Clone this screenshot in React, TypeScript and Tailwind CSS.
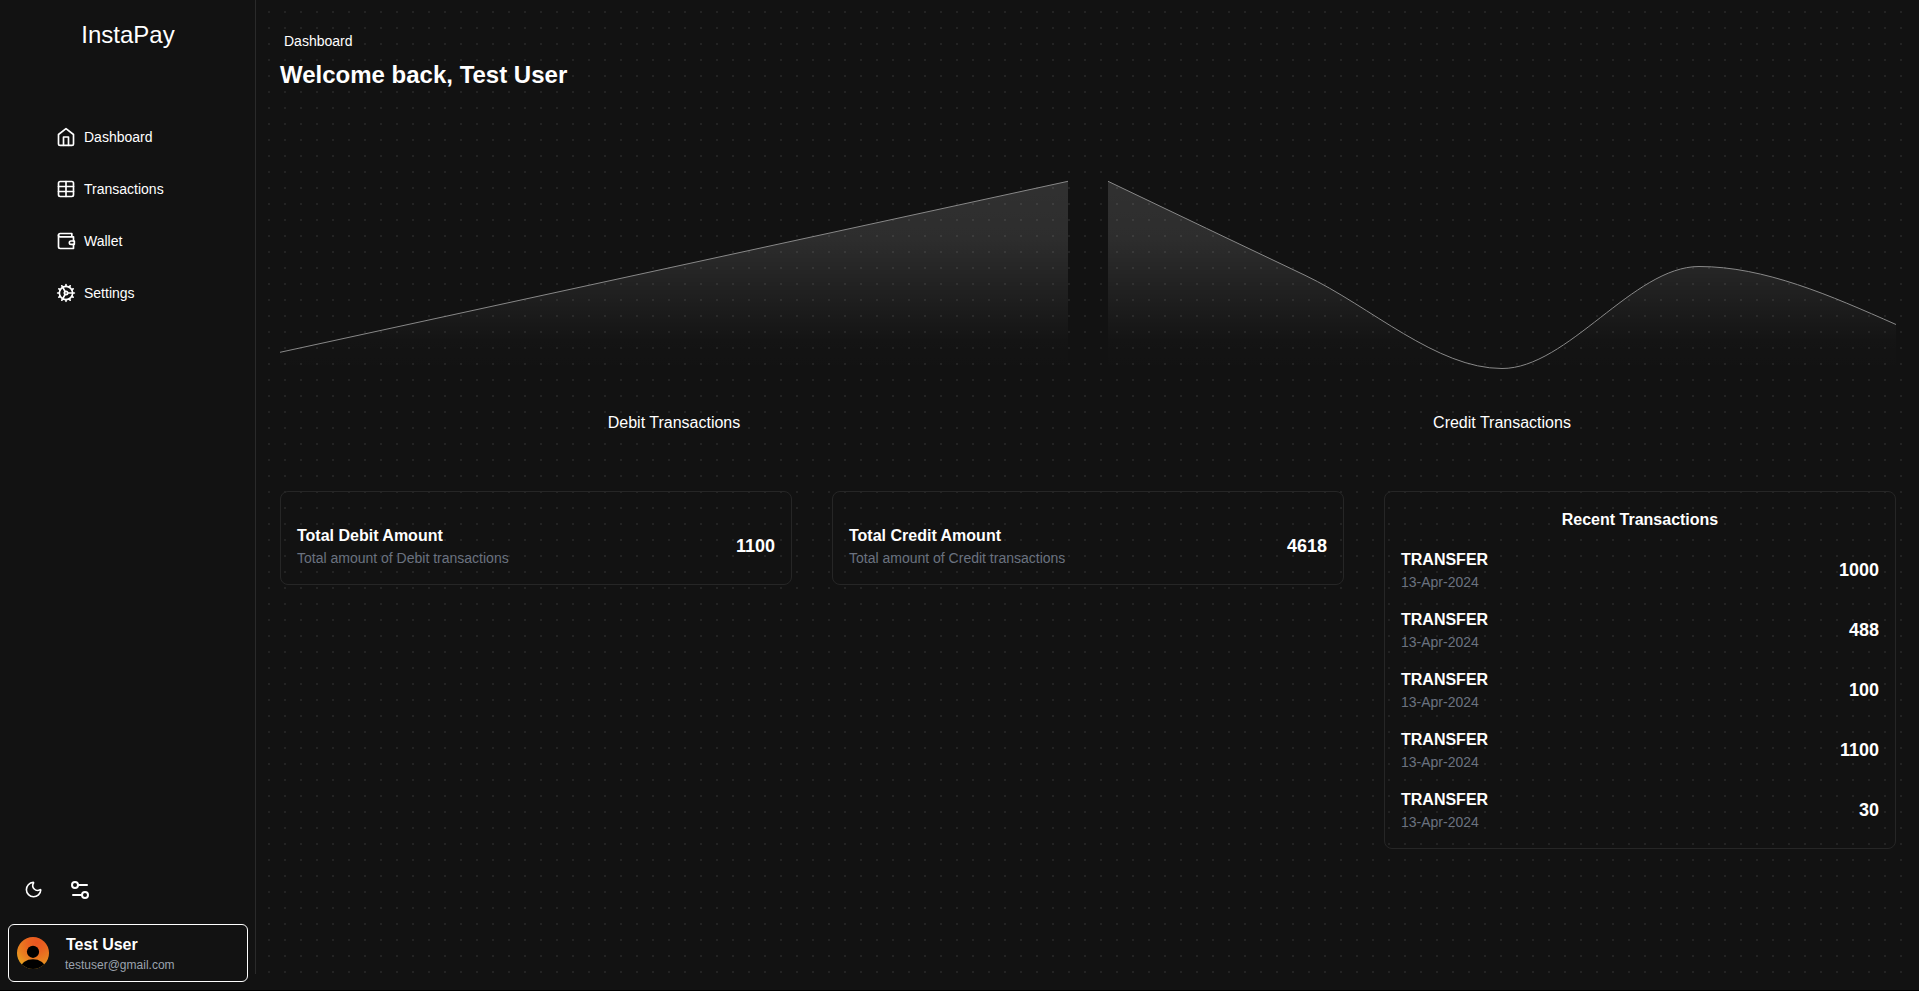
import { Cog, Moon, Settings2, Table } from "lucide-react";
import type { ReactNode } from "react";

type Point = [number, number];

/** Monotone cubic interpolation through evenly ordered points. */
function monotonePath(points: Point[]): string {
  const n = points.length;
  const slope = (i: number) =>
    (points[i + 1][1] - points[i][1]) / (points[i + 1][0] - points[i][0]);
  const tangents = points.map(() => 0);
  for (let i = 1; i < n - 1; i++) {
    const a = slope(i - 1);
    const b = slope(i);
    tangents[i] =
      (Math.sign(a) + Math.sign(b)) *
      Math.min(Math.abs(a), Math.abs(b), Math.abs(a + b) / 4);
  }
  if (n > 2) {
    tangents[0] = (3 * slope(0) - tangents[1]) / 2;
    tangents[n - 1] = (3 * slope(n - 2) - tangents[n - 2]) / 2;
  } else {
    tangents[0] = tangents[1] = slope(0);
  }
  let d = `M${points[0][0]},${points[0][1]}`;
  for (let i = 0; i < n - 1; i++) {
    const [x0, y0] = points[i];
    const [x1, y1] = points[i + 1];
    const h = (x1 - x0) / 3;
    d += `C${x0 + h},${y0 + h * tangents[i]},${x1 - h},${y1 - h * tangents[i + 1]},${x1},${y1}`;
  }
  return d;
}

function AreaChart({ id, title, points }: { id: string; title: string; points: Point[] }) {
  const line = monotonePath(points);
  return (
    <div className="flex min-w-0 flex-1 flex-col items-center">
      <svg viewBox="0 0 788 200" preserveAspectRatio="none" className="block h-[200px] w-full">
        <defs>
          <linearGradient id={id} x1="0" y1="0" x2="0" y2="1">
            <stop offset="5%" stopColor="#fff" stopOpacity="0.127" />
            <stop offset="30%" stopColor="#fff" stopOpacity="0.115" />
            <stop offset="83%" stopColor="#fff" stopOpacity="0.008" />
            <stop offset="100%" stopColor="#fff" stopOpacity="0" />
          </linearGradient>
        </defs>
        <path d={`${line}L788,198L0,198Z`} fill={`url(#${id})`} />
        <path d={line} fill="none" stroke="#888" strokeWidth="1" />
      </svg>
      <h3 className="mt-[35px] text-base">{title}</h3>
    </div>
  );
}

function LineIcon({ children }: { children: ReactNode }) {
  return (
    <svg
      viewBox="0 0 24 24"
      className="size-5"
      fill="none"
      stroke="currentColor"
      strokeWidth="2"
      strokeLinecap="round"
      strokeLinejoin="round"
    >
      {children}
    </svg>
  );
}

function HomeIcon() {
  return (
    <LineIcon>
      <path d="m3 9 9-7 9 7v11a2 2 0 0 1-2 2H5a2 2 0 0 1-2-2z" />
      <polyline points="9 22 9 12 15 12 15 22" />
    </LineIcon>
  );
}

function WalletIcon() {
  return (
    <LineIcon>
      <path d="M21 12V7H5a2 2 0 0 1 0-4h14v4" />
      <path d="M3 5v14a2 2 0 0 0 2 2h16v-5" />
      <path d="M18 12a2 2 0 0 0 0 4h4v-4Z" />
    </LineIcon>
  );
}

function Avatar() {
  return (
    <svg viewBox="0 0 32 32" className="size-8 shrink-0">
      <defs>
        <clipPath id="avatar-clip">
          <circle cx="16" cy="16" r="16" />
        </clipPath>
        <radialGradient id="avatar-fill" cx="0.62" cy="0.18" r="0.95">
          <stop offset="0%" stopColor="#ea5420" />
          <stop offset="30%" stopColor="#ea6420" />
          <stop offset="60%" stopColor="#e98020" />
          <stop offset="90%" stopColor="#e8a820" />
        </radialGradient>
      </defs>
      <g clipPath="url(#avatar-clip)">
        <rect width="32" height="32" fill="url(#avatar-fill)" />
        <circle cx="16" cy="14.8" r="6.1" fill="#000" />
        <ellipse cx="16" cy="30.5" rx="12" ry="8.2" fill="#000" />
      </g>
    </svg>
  );
}

const navItems: { label: string; icon: ReactNode }[] = [
  { label: "Dashboard", icon: <HomeIcon /> },
  { label: "Transactions", icon: <Table className="size-5" /> },
  { label: "Wallet", icon: <WalletIcon /> },
  { label: "Settings", icon: <Cog className="size-5" /> },
];

const transactions = [
  { type: "TRANSFER", date: "13-Apr-2024", amount: 1000 },
  { type: "TRANSFER", date: "13-Apr-2024", amount: 488 },
  { type: "TRANSFER", date: "13-Apr-2024", amount: 100 },
  { type: "TRANSFER", date: "13-Apr-2024", amount: 1100 },
  { type: "TRANSFER", date: "13-Apr-2024", amount: 30 },
];

const debitPoints: Point[] = [
  [0, 176.3],
  [788, 5.3],
];

const creditPoints: Point[] = [
  [0, 5.3],
  [197, 99.3],
  [394, 192.5],
  [591, 90.5],
  [788, 148.5],
];

function AmountRow({ title, detail, amount }: { title: string; detail: string; amount: number }) {
  return (
    <div className="flex items-center justify-between">
      <div>
        <p className="text-base font-bold">{title}</p>
        <p className="text-sm text-[#6b7280]">{detail}</p>
      </div>
      <span className="text-lg font-bold">{amount}</span>
    </div>
  );
}

function Card({ children }: { children: ReactNode }) {
  return <section className="rounded-lg border border-[#262626] p-4">{children}</section>;
}

function Sidebar() {
  return (
    <aside className="w-64 shrink-0">
      <div className="flex h-[974px] flex-col border-r border-[#2a2a2a]">
        <h1 className="mt-[19px] pl-px text-center text-2xl">InstaPay</h1>
        <nav className="mt-[76px] flex flex-col gap-8 pl-14">
          {navItems.map((item) => (
            <a key={item.label} className="flex h-5 items-center gap-2 text-sm">
              {item.icon}
              {item.label}
            </a>
          ))}
        </nav>
        <div className="mt-auto flex h-24 items-start gap-[25px] pl-6">
          <Moon className="mt-0.5 size-[19.2px]" />
          <Settings2 className="size-6" />
        </div>
      </div>
    </aside>
  );
}

function UserCard() {
  return (
    <div className="absolute top-[924px] left-2 flex h-[58px] w-60 items-center gap-4 rounded-md border border-white px-2">
      <Avatar />
      <div className="pt-1">
        <p className="pl-px text-base leading-5 font-bold">Test User</p>
        <p className="text-xs leading-5 text-[#9ca3af]">testuser@gmail.com</p>
      </div>
    </div>
  );
}

export default function App() {
  return (
    <div className="h-screen overflow-hidden bg-black font-['Liberation_Sans',Arial,sans-serif] text-white">
      <div className="relative flex h-[990px] bg-[#121212]">
        <Sidebar />
        <UserCard />
        <main className="mr-2 h-[984px] min-w-0 flex-1 bg-[conic-gradient(from_270deg_at_2px_2px,#232323_90deg,transparent_90deg)] bg-[size:16px_16px] bg-[position:12px_11px] pr-[15px] pl-6">
          <p className="pt-[31px] pl-1 text-sm">Dashboard</p>
          <h2 className="mt-2 text-2xl font-bold">Welcome back, Test User</h2>
          <div className="mt-[85px] flex gap-10">
            <AreaChart id="debit-fill" title="Debit Transactions" points={debitPoints} />
            <AreaChart id="credit-fill" title="Credit Transactions" points={creditPoints} />
          </div>
          <div className="mt-14 grid grid-cols-3 items-start gap-10">
            <Card>
              <div className="pt-4">
                <AmountRow
                  title="Total Debit Amount"
                  detail="Total amount of Debit transactions"
                  amount={1100}
                />
              </div>
            </Card>
            <Card>
              <div className="pt-4">
                <AmountRow
                  title="Total Credit Amount"
                  detail="Total amount of Credit transactions"
                  amount={4618}
                />
              </div>
            </Card>
            <Card>
              <div className="flex flex-col gap-4">
                <h3 className="text-center text-base font-bold">Recent Transactions</h3>
                {transactions.map((item, index) => (
                  <AmountRow key={index} title={item.type} detail={item.date} amount={item.amount} />
                ))}
              </div>
            </Card>
          </div>
        </main>
      </div>
    </div>
  );
}
